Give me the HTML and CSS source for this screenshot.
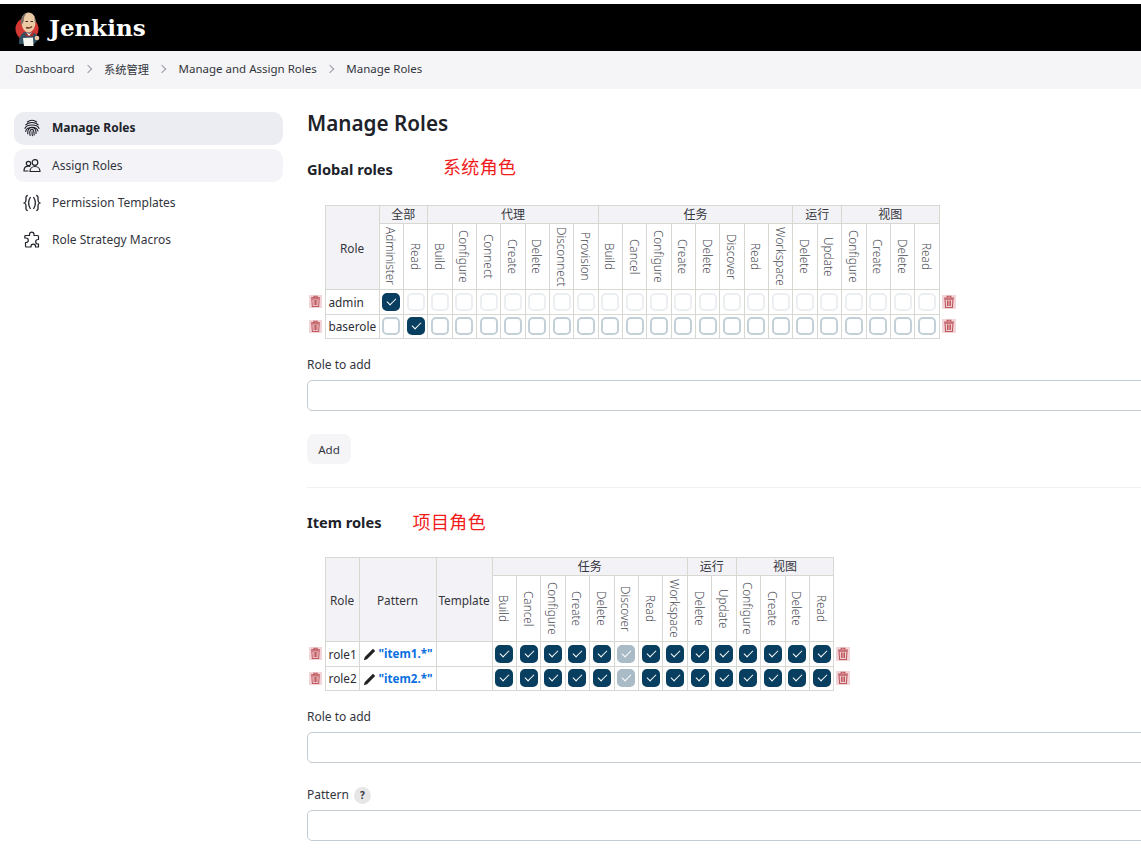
FILE: index.html
```html
<!DOCTYPE html>
<html lang="en">
<head>
<meta charset="utf-8">
<title>Manage Roles - Jenkins</title>
<link rel="stylesheet" href="styles.css">
</head>
<body>
<svg class="defs" width="0" height="0" aria-hidden="true">
  <symbol id="trash" viewBox="0 0 14 14">
    <rect width="14" height="14" fill="#f2d5d8"/>
    <path d="M3 4.200h8l-.6 8.300H3.600z M2 3h10 M5.200 2.800V1.300h3.600v1.500 M5.500 5.500v5.600 M7 5.500v5.600 M8.500 5.500v5.600" fill="none" stroke="#bf565c" stroke-width="1.100"/>
  </symbol>
  <symbol id="pencil" viewBox="0 0 14 14">
    <path d="M.8 13.200l1-3.200L10 1.800l2.200 2.200L4 12.200z" fill="#222"/>
  </symbol>
</svg>

<header class="topbar">
  <svg class="logo" width="27" height="36" viewBox="0 0 27 36" aria-hidden="true">
    <circle cx="12" cy="18" r="11.500" fill="#d33833"/>
    <path d="M4 33c-.5-6 2-11 6-12l9 1c3 1 4 4 4 7l-4 4H4z" fill="#335061"/>
    <path d="M10 22l4 2 5-3-1 4-3 .5-4-.5z" fill="#b52b27"/>
    <path d="M11 21l3 2 3-2-3 4z" fill="#f4f4f0"/>
    <path d="M6.500 12C6 5 9.500 1.500 13.500 1.500S21 5 20.500 12c-.3 5-3.500 9.500-7 9.500s-6.700-4.500-7-9.500z" fill="#eccaa6"/>
    <path d="M6.500 14C5 9 6.500 3.500 12 2c-2.500 2-3.500 5-3.200 8-.8 1.500-1.300 3-2.300 4z" fill="#7a6f68"/>
    <path d="M19.500 6c1.300 2 1.500 5 1 7.500-.8-1.500-1-4.500-1-7.500z" fill="#7a6f68"/>
    <path d="M10.500 10.500h2.500 M15.500 10.500h2.500" stroke="#3b2a20" stroke-width="1"/>
    <path d="M11 16.500c2 .8 4.500.5 6-1" fill="none" stroke="#6f3d26" stroke-width="1.500"/>
    <path d="M8 27l10-.5.500 8.500H9z" fill="#f6f6f1"/>
    <circle cx="22" cy="27" r="2.300" fill="#eccaa6"/>
  </svg>
  <span class="brand">Jenkins</span>
</header>

<nav class="crumbs">
  <a>Dashboard</a><span class="sep"></span>
  <a class="zh">系统管理</a><span class="sep"></span>
  <a>Manage and Assign Roles</a><span class="sep"></span>
  <a>Manage Roles</a>
</nav>

<div class="layout">
  <aside class="side">
    <a class="task current">
      <svg class="ico" viewBox="0 0 18 18" aria-hidden="true"><path d="M4 3.200C7 .8 11 .8 14 3.200 M2.500 6.200C5.500 2.500 12.500 2.500 15.500 6.200 M1.800 9.800C3.500 4.800 14.500 4.800 16.200 9.800 M2.600 13C3.300 7.200 13.800 6.500 15 12.500 M4.800 15.200C4.300 10 6.800 8.400 9 8.400C12.200 8.400 13.200 11 13 15 M7.200 16.800C6.200 13 7 10.400 9 10.400C11.200 10.400 11 14 11.200 16.500 M9 12.200C9 14 9 15.500 9.500 17.200" fill="none" stroke="#20222a" stroke-width="1.100"/></svg>
      <span>Manage Roles</span>
    </a>
    <a class="task hover">
      <svg class="ico" viewBox="0 0 18 18" aria-hidden="true"><circle cx="12" cy="5.500" r="2.800" fill="none" stroke="#20222a" stroke-width="1.200"/><circle cx="5.500" cy="6.500" r="2.200" fill="none" stroke="#20222a" stroke-width="1.200"/><path d="M7 14.500c0-3 2.200-5 5-5s5 2 5 5H7z M5.500 14H1c0-3 1.800-4.800 4.500-4.800 .8 0 1.300 .1 1.800 .4" fill="none" stroke="#20222a" stroke-width="1.200"/></svg>
      <span>Assign Roles</span>
    </a>
    <a class="task">
      <svg class="ico" viewBox="0 0 18 18" aria-hidden="true"><path d="M4.800 1.500C2.500 1.500 3 4 3 6S3 8.500 1.300 9C3 9.500 3 10 3 12s-.5 4.500 1.800 4.500 M13.200 1.500C15.500 1.500 15 4 15 6s0 2.500 1.700 3C15 9.500 15 10 15 12s.5 4.500-1.800 4.500 M7.500 3C5.300 6.500 5.300 11.500 7.500 15 M10.500 3C12.700 6.500 12.700 11.500 10.500 15" fill="none" stroke="#20222a" stroke-width="1.300"/></svg>
      <span>Permission Templates</span>
    </a>
    <a class="task">
      <svg class="ico" viewBox="0 0 18 18" aria-hidden="true"><path d="M6.500 3.500C6.500 2 7.500 1.200 8.700 1.200S11 2 11 3.500V4.500h3.500a1 1 0 0 1 1 1V8.500H15c-1.500 0-2.300 1-2.300 2.200S13.500 13 15 13h.5v3H12.500v-.7c0-1.300-1-2.200-2.200-2.200S8 14 8 15.300V16H3.500a1 1 0 0 1-1-1V11.500H3c1.400 0 2.300-1 2.300-2.200S4.400 7 3 7H1.800V5.500a1 1 0 0 1 1-1H6.500z" fill="none" stroke="#20222a" stroke-width="1.200" stroke-linejoin="round"/></svg>
      <span>Role Strategy Macros</span>
    </a>
  </aside>

  <main class="main">
    <h1>Manage Roles</h1>

    <h2 class="sec sec-global">Global roles<span class="note note-global">系统角色</span></h2>

    <table class="roles global">
      <colgroup>
        <col class="c-side"><col class="c-role">
        <col class="c-p"><col class="c-p"><col class="c-p"><col class="c-p"><col class="c-p"><col class="c-p"><col class="c-p"><col class="c-p"><col class="c-p"><col class="c-p"><col class="c-p"><col class="c-p"><col class="c-p"><col class="c-p"><col class="c-p"><col class="c-p"><col class="c-p"><col class="c-p"><col class="c-p"><col class="c-p"><col class="c-p"><col class="c-p"><col class="c-p">
        <col class="c-side">
      </colgroup>
      <thead>
        <tr class="r-group">
          <th class="blank" rowspan="2"></th>
          <th class="lead" rowspan="2">Role</th>
          <th colspan="2">全部</th><th colspan="7">代理</th><th colspan="8">任务</th><th colspan="2">运行</th><th colspan="4">视图</th>
          <th class="blank" rowspan="2"></th>
        </tr>
        <tr class="r-perm">
          <th><span class="v">Administer</span></th><th><span class="v">Read</span></th>
          <th><span class="v">Build</span></th><th><span class="v">Configure</span></th><th><span class="v">Connect</span></th><th><span class="v">Create</span></th><th><span class="v">Delete</span></th><th><span class="v">Disconnect</span></th><th><span class="v">Provision</span></th>
          <th><span class="v">Build</span></th><th><span class="v">Cancel</span></th><th><span class="v">Configure</span></th><th><span class="v">Create</span></th><th><span class="v">Delete</span></th><th><span class="v">Discover</span></th><th><span class="v">Read</span></th><th><span class="v">Workspace</span></th>
          <th><span class="v">Delete</span></th><th><span class="v">Update</span></th>
          <th><span class="v">Configure</span></th><th><span class="v">Create</span></th><th><span class="v">Delete</span></th><th><span class="v">Read</span></th>
        </tr>
      </thead>
      <tbody>
        <tr>
          <td class="blank"><svg class="trash"><use href="#trash"/></svg></td>
          <td class="name">admin</td>
          <td><i class="cb on"></i></td><td><i class="cb off"></i></td><td><i class="cb off"></i></td><td><i class="cb off"></i></td><td><i class="cb off"></i></td><td><i class="cb off"></i></td><td><i class="cb off"></i></td><td><i class="cb off"></i></td><td><i class="cb off"></i></td><td><i class="cb off"></i></td><td><i class="cb off"></i></td><td><i class="cb off"></i></td><td><i class="cb off"></i></td><td><i class="cb off"></i></td><td><i class="cb off"></i></td><td><i class="cb off"></i></td><td><i class="cb off"></i></td><td><i class="cb off"></i></td><td><i class="cb off"></i></td><td><i class="cb off"></i></td><td><i class="cb off"></i></td><td><i class="cb off"></i></td><td><i class="cb off"></i></td>
          <td class="blank"><svg class="trash"><use href="#trash"/></svg></td>
        </tr>
        <tr>
          <td class="blank"><svg class="trash"><use href="#trash"/></svg></td>
          <td class="name">baserole</td>
          <td><i class="cb"></i></td><td><i class="cb on"></i></td><td><i class="cb"></i></td><td><i class="cb"></i></td><td><i class="cb"></i></td><td><i class="cb"></i></td><td><i class="cb"></i></td><td><i class="cb"></i></td><td><i class="cb"></i></td><td><i class="cb"></i></td><td><i class="cb"></i></td><td><i class="cb"></i></td><td><i class="cb"></i></td><td><i class="cb"></i></td><td><i class="cb"></i></td><td><i class="cb"></i></td><td><i class="cb"></i></td><td><i class="cb"></i></td><td><i class="cb"></i></td><td><i class="cb"></i></td><td><i class="cb"></i></td><td><i class="cb"></i></td><td><i class="cb"></i></td>
          <td class="blank"><svg class="trash"><use href="#trash"/></svg></td>
        </tr>
      </tbody>
    </table>

    <label class="lbl lbl-first">Role to add</label>
    <div class="input"></div>
    <button class="btn" type="button">Add</button>
    <hr class="rule">

    <h2 class="sec sec-item">Item roles<span class="note note-item">项目角色</span></h2>

    <table class="roles item">
      <colgroup>
        <col class="c-side"><col class="c-irole"><col class="c-pattern"><col class="c-template">
        <col class="c-p"><col class="c-p"><col class="c-p"><col class="c-p"><col class="c-p"><col class="c-p"><col class="c-p"><col class="c-p"><col class="c-p"><col class="c-p"><col class="c-p"><col class="c-p"><col class="c-p"><col class="c-p">
        <col class="c-side">
      </colgroup>
      <thead>
        <tr class="r-group">
          <th class="blank" rowspan="2"></th>
          <th class="lead" rowspan="2">Role</th>
          <th class="lead" rowspan="2">Pattern</th>
          <th class="lead" rowspan="2">Template</th>
          <th colspan="8">任务</th><th colspan="2">运行</th><th colspan="4">视图</th>
          <th class="blank" rowspan="2"></th>
        </tr>
        <tr class="r-perm">
          <th><span class="v">Build</span></th><th><span class="v">Cancel</span></th><th><span class="v">Configure</span></th><th><span class="v">Create</span></th><th><span class="v">Delete</span></th><th><span class="v">Discover</span></th><th><span class="v">Read</span></th><th><span class="v">Workspace</span></th>
          <th><span class="v">Delete</span></th><th><span class="v">Update</span></th>
          <th><span class="v">Configure</span></th><th><span class="v">Create</span></th><th><span class="v">Delete</span></th><th><span class="v">Read</span></th>
        </tr>
      </thead>
      <tbody>
        <tr>
          <td class="blank"><svg class="trash"><use href="#trash"/></svg></td>
          <td class="name">role1</td>
          <td class="pat"><svg class="pencil"><use href="#pencil"/></svg><a>"item1.*"</a></td>
          <td></td>
          <td><i class="cb on"></i></td><td><i class="cb on"></i></td><td><i class="cb on"></i></td><td><i class="cb on"></i></td><td><i class="cb on"></i></td><td><i class="cb on dim"></i></td><td><i class="cb on"></i></td><td><i class="cb on"></i></td><td><i class="cb on"></i></td><td><i class="cb on"></i></td><td><i class="cb on"></i></td><td><i class="cb on"></i></td><td><i class="cb on"></i></td><td><i class="cb on"></i></td>
          <td class="blank"><svg class="trash"><use href="#trash"/></svg></td>
        </tr>
        <tr>
          <td class="blank"><svg class="trash"><use href="#trash"/></svg></td>
          <td class="name">role2</td>
          <td class="pat"><svg class="pencil"><use href="#pencil"/></svg><a>"item2.*"</a></td>
          <td></td>
          <td><i class="cb on"></i></td><td><i class="cb on"></i></td><td><i class="cb on"></i></td><td><i class="cb on"></i></td><td><i class="cb on"></i></td><td><i class="cb on dim"></i></td><td><i class="cb on"></i></td><td><i class="cb on"></i></td><td><i class="cb on"></i></td><td><i class="cb on"></i></td><td><i class="cb on"></i></td><td><i class="cb on"></i></td><td><i class="cb on"></i></td><td><i class="cb on"></i></td>
          <td class="blank"><svg class="trash"><use href="#trash"/></svg></td>
        </tr>
      </tbody>
    </table>

    <label class="lbl lbl-second">Role to add</label>
    <div class="input"></div>
    <label class="lbl lbl-next">Pattern <span class="help">?</span></label>
    <div class="input"></div>
  </main>
</div>
</body>
</html>
```

FILE: styles.css
```css
* { box-sizing: border-box; }
html, body { margin: 0; height: 848px; overflow: hidden; }
body {
  background: #fff;
  color: #20222a;
  font-family: "Noto Sans", "Noto Sans CJK SC", sans-serif;
  font-size: 12px;
  padding-top: 4px;
}
.defs { position: absolute; }

.topbar {
  height: 47px;
  background: #000;
  display: flex;
  align-items: center;
  padding-left: 15px;
  gap: 7px;
}
.logo { flex: none; margin-top: 3px; }
.brand {
  color: #fff;
  font-family: "DejaVu Serif", serif;
  font-weight: 700;
  font-size: 23px;
  line-height: 1;
}

.crumbs {
  height: 38px;
  background: #f5f5f7;
  display: flex;
  align-items: center;
  padding: 0 0 3px 15px;
  color: #33353d;
  font-size: 11.500px;
}
.zh { font-size: 11.250px; }
.sep {
  width: 6px;
  height: 6px;
  margin: 0 13.500px 0 10px;
  border-top: 1px solid #9a9ca5;
  border-right: 1px solid #9a9ca5;
  transform: rotate(45deg);
}

.layout { display: flex; }
.side {
  flex: none;
  width: 307px;
  padding: 23px 24px 0 14px;
  display: flex;
  flex-direction: column;
  gap: 4px;
}
.task {
  height: 33px;
  display: flex;
  align-items: center;
  gap: 11px;
  padding-left: 9px;
  border-radius: 10px;
  font-size: 12px;
  color: #33353d;
}
.task.current { background: #ecedf3; font-weight: 700; color: #20222a; padding-bottom: 2px; }
.task.hover { background: #f4f4f8; }
.ico { width: 18px; height: 18px; flex: none; }

.main { flex: 1; min-width: 0; overflow: hidden; padding-top: 19px; }
h1 {
  margin: 0;
  font-size: 20.700px;
  font-weight: 600;
  line-height: 30px;
}
.sec {
  margin: 0;
  display: flex;
  align-items: center;
  font-size: 14.600px;
  font-weight: 700;
  line-height: 24px;
}
.sec-global { margin-top: 19px; }
.sec-item { margin-top: 22px; }
.note {
  color: #f01c1c;
  font-family: "Noto Sans CJK SC", sans-serif;
  font-weight: 400;
  font-size: 18px;
  letter-spacing: .4px;
}
.note-global { margin-left: 50px; position: relative; top: -3px; }
.note-item { margin-left: 31px; position: relative; top: -1px; }

.roles {
  table-layout: fixed;
  border-collapse: collapse;
  font-size: 12px;
}
.global { width: 650px; margin-top: 24px; }
.item { width: 545px; margin-top: 23px; }
.c-side { width: 18px; }
.c-role { width: 54px; }
.global .c-p { width: 24.348px; }
.item .c-p { width: 24.429px; }
.c-irole { width: 34px; }
.c-pattern { width: 77px; }
.c-template { width: 56px; }

.roles th, .roles td {
  border: 1px solid #d8d8d3;
  padding: 0;
  text-align: center;
  overflow: hidden;
}
.roles .blank { border: 0; background: #fff; }
.r-group th { height: 18px; background: #f3f3f7; font-weight: 400; line-height: 16px; color: #33353d; }
.roles th.lead { background: #f3f3f7; font-weight: 400; color: #33353d; font-size: 11.800px; }
.r-perm th { height: 66px; font-weight: 400; background: #fff; }
.roles tbody tr { height: 24.500px; }
.v {
  display: inline-block;
  writing-mode: vertical-rl;
  font-size: 11.800px;
  font-weight: 300;
  line-height: 14px;
  color: #4a4c54;
  vertical-align: middle;
}
.roles .name { text-align: left; padding-left: 3px; color: #2b2d35; white-space: nowrap; font-size: 11.800px; }
.roles .pat { text-align: left; padding-left: 3px; white-space: nowrap; font-size: 11.600px; }
.pat a { color: #0b6fe0; font-weight: 700; }
.pencil { width: 14px; height: 14px; margin-right: 2px; vertical-align: -3px; }
.trash { width: 13px; height: 13px; display: block; margin-left: 2px; }
td.blank:last-child .trash { width: 14px; height: 14px; }

.cb {
  display: block;
  position: relative;
  width: 18px;
  height: 18px;
  margin: 0 auto;
  border: 2px solid #c4d0d8;
  border-radius: 5px;
  background: #fff;
}
.cb.off { border-color: #eceff1; }
.cb.on { background: #083e5f; border-color: #083e5f; }
.cb.on::after {
  content: "";
  position: absolute;
  left: 3px;
  top: 3px;
  width: 8px;
  height: 4px;
  border-left: 1.500px solid #fff;
  border-bottom: 1.500px solid #fff;
  transform: rotate(-45deg);
}
.cb.dim { background: #a8bbc7; border-color: #a8bbc7; }

.lbl { display: block; line-height: 18px; color: #33353d; }
.lbl-first { margin-top: 17px; }
.lbl-second { margin-top: 17px; }
.lbl-next { margin-top: 23px; }
.input {
  width: 900px;
  height: 31px;
  margin-top: 6px;
  background: #fff;
  border: 1px solid #c3ccd3;
  border-radius: 5px;
}
.btn {
  display: block;
  width: 44px;
  height: 30px;
  margin-top: 23px;
  border: 0;
  border-radius: 8px;
  background: #f5f5f8;
  color: #33353d;
  font: inherit;
  font-size: 11.600px;
  padding: 0;
}
.rule { width: 900px; height: 1px; margin: 23px 0 0; border: 0; background: #f0f0f2; }
.help {
  display: inline-block;
  width: 17px;
  height: 17px;
  margin-left: 2px;
  border-radius: 50%;
  background: #e6e6e6;
  font-size: 10px;
  font-weight: 700;
  line-height: 17px;
  text-align: center;
}
```
